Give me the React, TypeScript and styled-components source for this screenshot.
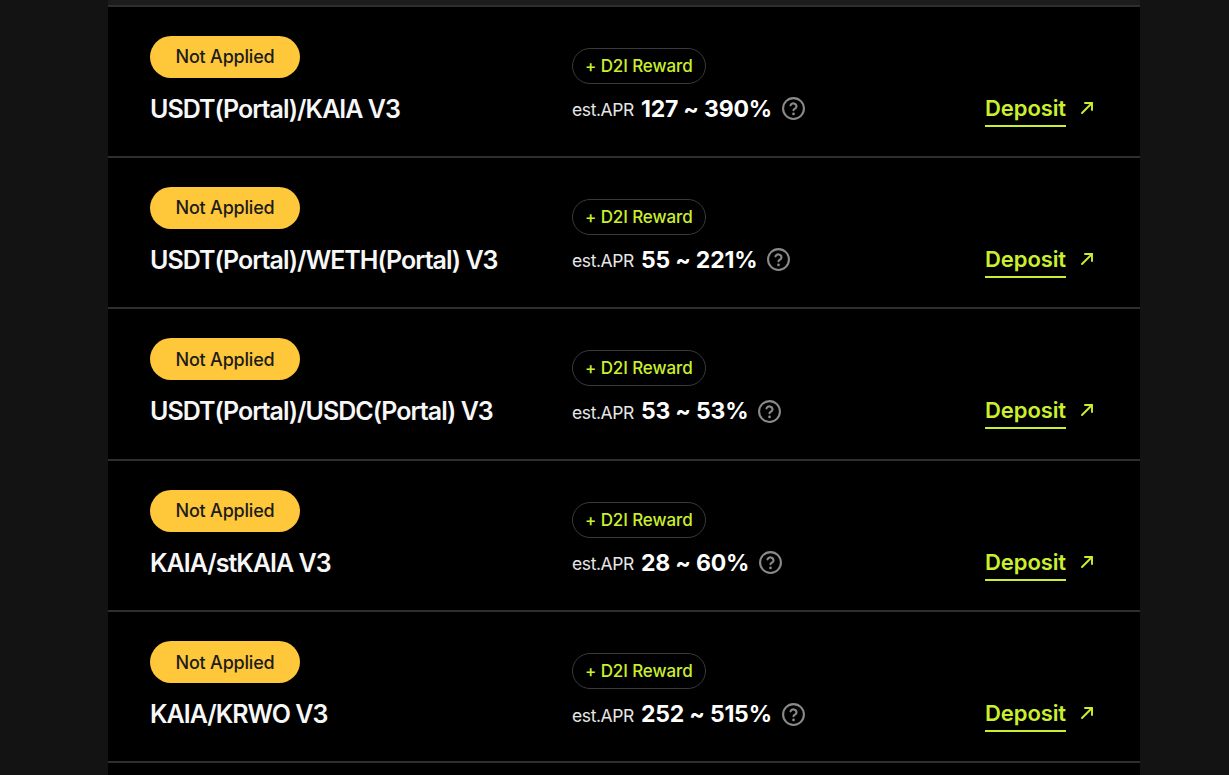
import styled, { createGlobalStyle } from "styled-components";

interface Pool {
    id : number;
    name : string;
    aprMin : number;
    aprMax : number;
}

const pools : Pool[] = [
    { id : 1, name : 'USDT(Portal)/KAIA V3', aprMin : 127, aprMax : 390 },
    { id : 2, name : 'USDT(Portal)/WETH(Portal) V3', aprMin : 55, aprMax : 221 },
    { id : 3, name : 'USDT(Portal)/USDC(Portal) V3', aprMin : 53, aprMax : 53 },
    { id : 4, name : 'KAIA/stKAIA V3', aprMin : 28, aprMax : 60 },
    { id : 5, name : 'KAIA/KRWO V3', aprMin : 252, aprMax : 515 },
];

const HelpIcon = () => (
    <svg width="25" height="25" viewBox="0 0 24 24" fill="none" stroke="#8a8a8a" strokeWidth="2" strokeLinecap="round" strokeLinejoin="round">
        <circle cx="12" cy="12" r="10" />
        <path d="M9.1 9a3 3 0 0 1 5.8 1c0 2-2.9 2.6-2.9 3.6" />
        <path d="M12 17.2h.01" strokeWidth="2.6" />
    </svg>
);

const ArrowIcon = () => (
    <svg width="14" height="14" viewBox="0 0 14 14" fill="none" stroke="#cbef2e" strokeWidth="1.9" strokeLinecap="round" strokeLinejoin="round">
        <path d="M2 12L12 2" />
        <path d="M5 2h7v7" />
    </svg>
);

const App = () => {
    return (
        <>
            <GlobalStyle />
            <Page>
                <Panel>
                    <TableHead />
                    {
                        pools.map((pool) => {
                            return (
                                <PoolRow key={pool.id}>
                                    <NameCol>
                                        <StatusBadge>Not Applied</StatusBadge>
                                        <PoolName>{pool.name}</PoolName>
                                    </NameCol>
                                    <AprCol>
                                        <RewardPill>+ D2I Reward</RewardPill>
                                        <AprLine>
                                            <AprLabel>est.APR</AprLabel>
                                            <AprValue>{pool.aprMin} ~ {pool.aprMax}%</AprValue>
                                            <HelpIcon />
                                        </AprLine>
                                    </AprCol>
                                    <DepositLink href="#">
                                        <DepositText>Deposit</DepositText>
                                        <ArrowIcon />
                                    </DepositLink>
                                </PoolRow>
                            )
                        })
                    }
                    <PoolRowRest />
                </Panel>
            </Page>
        </>
    )
}

export default App;

const GlobalStyle = createGlobalStyle`
    html, body {
        margin : 0;
        padding : 0;
        background : #131313;
        font-family : Inter, "Noto Sans", sans-serif;
    }
`;

const Page = styled.div`
    height : 775px;
    overflow : hidden;
    padding-left : 108px;
    padding-right : 89px;
`;

const Panel = styled.div`
    width : 1032px;
    height : 100%;
    background : #000;
`;

const TableHead = styled.div`
    height : 4.5px;
    background : #1c1c1c;
`;

const PoolRow = styled.div`
    box-sizing : border-box;
    height : 151.4px;
    border-top : 2px solid #2e2e2e;
    display : grid;
    grid-template-columns : 422px 1fr auto;
    align-items : start;
    padding : 29px 46px 0 42px;
`;

const PoolRowRest = styled.div`
    border-top : 2px solid #2e2e2e;
`;

const NameCol = styled.div`
    display : flex;
    flex-direction : column;
    align-items : flex-start;
    gap : 16px;
`;

const StatusBadge = styled.span`
    display : inline-flex;
    align-items : center;
    justify-content : center;
    height : 42px;
    width : 150px;
    border-radius : 21px;
    background : #ffc83a;
    color : #1c1c1c;
    font-size : 18px;
    font-weight : 500;
    letter-spacing : -0.2px;
`;

const PoolName = styled.div`
    font-size : 25px;
    line-height : 30px;
    font-weight : 600;
    color : #f7f7f7;
    letter-spacing : -1px;
`;

const AprCol = styled.div`
    margin-top : 12px;
    display : flex;
    flex-direction : column;
    align-items : flex-start;
    gap : 11px;
`;

const RewardPill = styled.span`
    box-sizing : border-box;
    display : inline-flex;
    align-items : center;
    height : 36px;
    padding : 0 12px;
    border : 1px solid #3a3a3a;
    border-radius : 18px;
    color : #cbef2e;
    font-size : 17px;
    font-weight : 500;
    letter-spacing : -0.1px;
`;

const AprLine = styled.div`
    display : flex;
    align-items : center;
    height : 28px;
`;

const AprLabel = styled.span`
    font-size : 17.5px;
    color : #e6e6e6;
    letter-spacing : -0.4px;
    margin-right : 7px;
    position : relative;
    top : 1px;
`;

const AprValue = styled.span`
    font-size : 23px;
    font-weight : 700;
    color : #fff;
    letter-spacing : -0.2px;
    margin-right : 9px;
`;

const DepositLink = styled.a`
    margin-top : 58px;
    display : flex;
    align-items : flex-start;
    gap : 14px;
    text-decoration : none;

    svg {
        margin-top : 7px;
    }
`;

const DepositText = styled.span`
    display : inline-block;
    font-size : 22px;
    line-height : 28px;
    font-weight : 600;
    color : #cbef2e;
    padding-bottom : 3px;
    border-bottom : 2px solid #cbef2e;
    letter-spacing : -0.1px;
`;
